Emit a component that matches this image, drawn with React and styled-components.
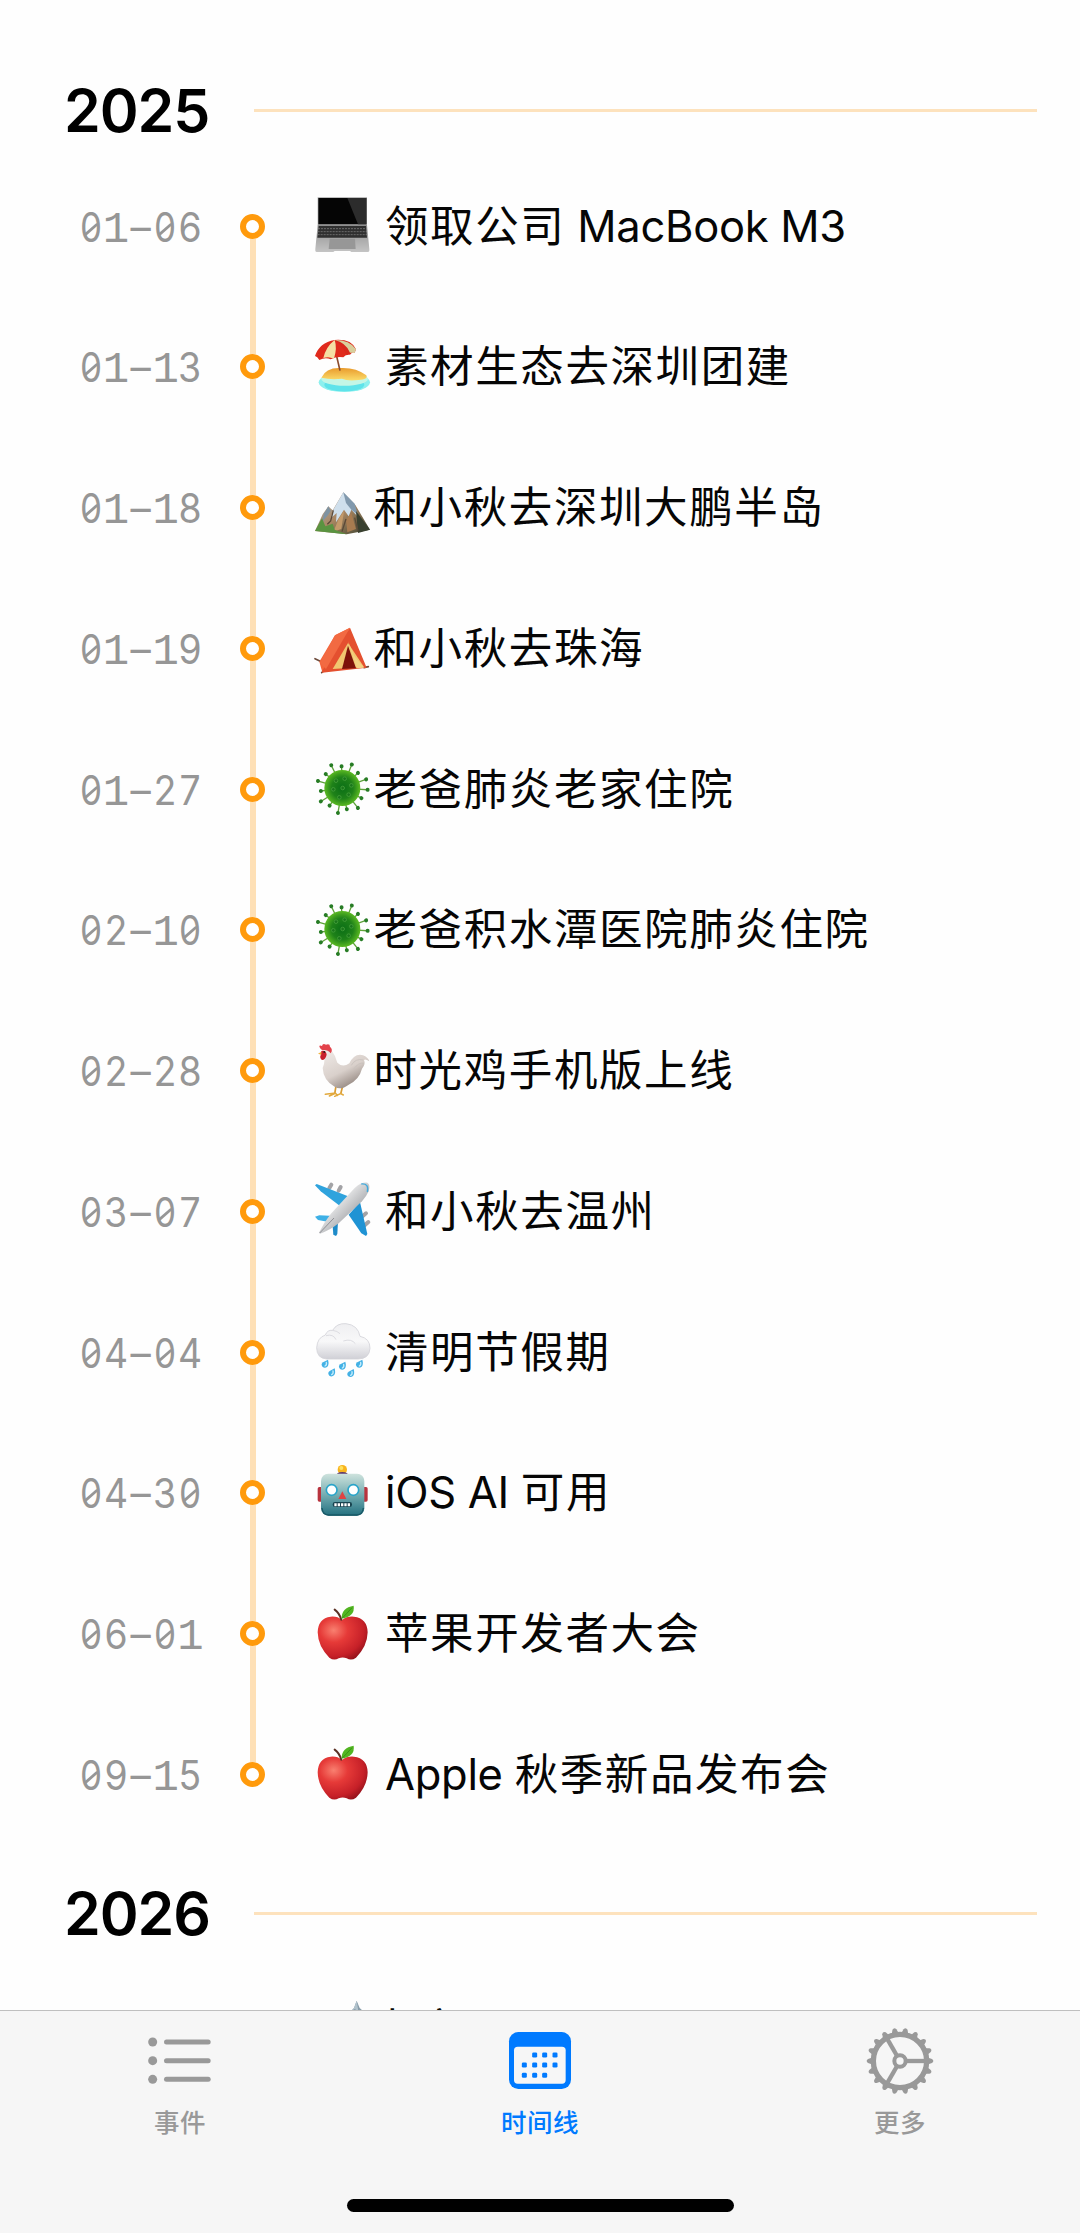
import styled, { createGlobalStyle } from 'styled-components'
import React from "react"

const GlobalStyle = createGlobalStyle`
    * {
        box-sizing: border-box;
    }
    body {
        margin: 0;
        background-color: #fefefe;
        font-family: Inter, "Noto Sans CJK SC", sans-serif;
    }
`;

const Screen = styled.div`
    width: 1080px;
    height: 2233px;
    display: flex;
    flex-direction: column;
    overflow: hidden;
    background-color: #fefefe;
`;

const Timeline = styled.main`
    height: 2010px;
    flex: none;
    padding-top: 65px;
    overflow: hidden;
`;

const YearSection = styled.section`
    margin-bottom: 23.3px;
`;

const YearHeader = styled.header`
    height: 90.8px;
    display: flex;
    align-items: center;
    padding: 0 43px 0 64px;
`;

const YearTitle = styled.h2`
    width: 190px;
    margin: 0;
    padding-top: 2px;
    color: #000;
    font-size: 59px;
    font-weight: 600;
    line-height: 70px;
    letter-spacing: -1.1px;
`;

const YearRule = styled.div`
    flex: 1;
    height: 3px;
    background-color: #fde2bd;
`;

const Row = styled.div`
    height: 140.76px;
    display: grid;
    grid-template-columns: 160px 66px 1fr;
    align-items: center;
    padding-left: 78.5px;
`;

const DateLabel = styled.time`
    display: grid;
    grid-template-columns: repeat(5, 24.9px);
    justify-items: center;
    align-items: baseline;
    color: #969696;
    font-size: 40.5px;
    font-weight: 400;
    line-height: 50px;
    font-feature-settings: "tnum";
    padding-top: 3px;
`;

const Digit = styled.span`
    transform: scaleX(0.92);
`;

const SlabDigit = styled.span`
    font-family: "Liberation Mono", monospace;
    font-size: 44px;
    line-height: 40px;
`;

// zero with a slash that stays inside the bowl
const Zero = styled.span`
    position: relative;
    transform: scaleX(0.86);

    &::after {
        content: '';
        position: absolute;
        left: 4px;
        right: 4px;
        top: 25px;
        height: 3px;
        background-color: #969696;
        transform: rotate(-37deg);
    }
`;

const Track = styled.div`
    width: 25px;
    height: 100%;
    margin-left: 1.5px;
    display: grid;
    grid-template-rows: 1fr 25px 1fr;
    justify-items: center;
`;

const TrackLine = styled.div`
    width: 6px;
    background-color: ${(props) => (props.$hidden ? 'transparent' : '#fee0b6')};
`;

const Dot = styled.div`
    width: 25px;
    height: 25px;
    border: 6px solid #ff9a0c;
    border-radius: 50%;
    background-color: #fff;
`;

const Event = styled.div`
    display: flex;
    align-items: center;
    padding-left: 9px;
    gap: ${(props) => (props.$spaced ? '15.5px' : '4px')};
`;

const EmojiSvg = styled.svg`
    width: 56px;
    height: 56px;
    flex: none;
    overflow: visible;
    margin-top: -2px;
`;

const EventText = styled.span`
    color: #060606;
    font-size: 43.5px;
    line-height: 60px;
    letter-spacing: ${(props) => (props.$latin ? '-0.3px' : '1.6px')};
    white-space: pre;
`;

const TitleBox = styled.div`
    margin-top: -1px;
`;

const TabBar = styled.nav`
    height: 223px;
    flex: none;
    display: flex;
    flex-direction: column;
    align-items: center;
    background-color: #f6f6f6;
    border-top: 1px solid #bfbfbf;
`;

const Tabs = styled.div`
    width: 100%;
    height: 188px;
    display: grid;
    grid-template-columns: repeat(3, 1fr);
    padding-top: 14px;
`;

const Tab = styled.div`
    display: flex;
    flex-direction: column;
    align-items: center;
    color: ${(props) => (props.$active ? '#007aff' : '#999')};
    font-size: 25.5px;
    font-weight: 500;
    line-height: 36px;
    letter-spacing: 0.5px;
    gap: 8px;
`;

const TabSvg = styled.svg`
    width: 72px;
    height: 72px;
`;

const HomeIndicator = styled.div`
    width: 387px;
    height: 13px;
    border-radius: 7px;
    background-color: #000;
`;

const Laptop = () => (
    <>
        <defs>
            <linearGradient id="lapBase" x1="0" y1="0" x2="0" y2="1">
                <stop offset="0" stopColor="#8e8e8e" />
                <stop offset="1" stopColor="#c4c4c4" />
            </linearGradient>
        </defs>
        <path d="M11 1H159V84H11Z" fill="#a9a9a9" />
        <path d="M13 3H157V82H13Z" fill="#050505" />
        <path d="M100 3H157V82H132Z" fill="#2c2c2c" />
        <path d="M11 84H159L166 156Q167 165 162 165L112 165L108 162H62L58 165H8Q3 165 4 156Z" fill="url(#lapBase)" />
        <path d="M14 87H156L159 122H10Z" fill="#303030" />
        <path d="M12 95H158M11 104H159M11 113H160" stroke="#8a8a8a" strokeWidth="2" strokeDasharray="6 3" />
        <path d="M47 125H123L125 156H44Z" fill="#979797" />
    </>
)

const Beach = () => (
    <>
        <defs>
            <linearGradient id="sand" x1="0" y1="0" x2="0" y2="1">
                <stop offset="0" stopColor="#e99b2c" />
                <stop offset="1" stopColor="#fbdc6b" />
            </linearGradient>
        </defs>
        <ellipse cx="91" cy="133" rx="77" ry="29" fill="#8df0ee" />
        <ellipse cx="91" cy="140" rx="60" ry="20" fill="#5fe3ea" />
        <ellipse cx="92" cy="123" rx="70" ry="20" fill="#c4f6e6" />
        <path d="M22 119Q36 88 80 90Q126 88 157 112Q164 124 134 126Q100 130 84 122Q50 126 22 119Z" fill="url(#sand)" />
        <path d="M66 46L78 98" stroke="#8b4a2b" strokeWidth="5" />
        <path d="M3 54Q16 14 62 6Q112 2 126 34L122 44Q116 40 108 50Q96 48 88 58Q70 54 50 64Q34 56 16 66Q10 56 3 54Z" fill="#e02a1c" />
        <path d="M62 6Q36 26 28 60Q44 54 60 62Q70 30 62 6Z" fill="#f5dfa4" />
        <path d="M62 6Q84 20 98 52L112 46Q94 14 62 6Z" fill="#d9281b" />
        <path d="M62 6Q108 6 126 34L122 44L108 44Q96 14 62 6Z" fill="#d8cf9c" />
    </>
)

const Mountain = () => (
    <>
        <defs>
            <linearGradient id="rock" x1="0" y1="0" x2="1" y2="1">
                <stop offset="0" stopColor="#a6b9c8" />
                <stop offset=".5" stopColor="#a98662" />
                <stop offset="1" stopColor="#37402d" />
            </linearGradient>
        </defs>
        <path d="M3 156L26 106L43 82L56 94L88 40L124 78L168 152L98 166Z" fill="url(#rock)" />
        <path d="M88 40L58 92L50 118L68 102L66 130L90 92L104 112L112 92L130 112L120 74Z" fill="#cfdfec" />
        <path d="M88 40L96 72L112 92L132 108L122 74Z" fill="#8199ad" />
        <path d="M43 82L30 104L24 130L42 108L50 96Z" fill="#7f93a2" />
        <path d="M74 120L90 96L82 150L58 158Z" fill="#c49a6a" />
        <path d="M112 102L126 150L100 160L96 122Z" fill="#a87b50" />
        <path d="M126 96L168 152L132 162Z" fill="#39402f" />
        <path d="M3 156L24 118L34 142L56 134L62 152L98 166Z" fill="#5a9340" />
        <path d="M58 94L50 126L40 136M96 120L84 158M122 116L132 156" stroke="#5b4938" strokeWidth="4" fill="none" />
    </>
)

const Tent = () => (
    <>
        <path d="M3 119L22 128M23 161L38 148M163 143L150 146" stroke="#6d4b3c" strokeWidth="5" strokeLinecap="round" />
        <path d="M63 49L108 26L56 151L25 160L16 128Z" fill="#f4643a" />
        <path d="M108 26L158 146L24 161Q22 156 28 150Z" fill="#e4502f" />
        <path d="M63 49L108 26L36 150L18 132Z" fill="#f26a42" />
        <path d="M102 72L56 150L150 144Z" fill="#f1c670" />
        <path d="M102 80L84 150L126 148Z" fill="#7d120a" />
        <path d="M102 66L120 110L150 146L128 148Z" fill="#f3d184" />
    </>
)

const spikes = [4, 28, 52, 78, 100, 126, 148, 172, 196, 220, 244, 268, 292, 316, 340]

const Virus = () => (
    <>
        <defs>
            <radialGradient id="virus">
                <stop offset="0" stopColor="#0a6e16" />
                <stop offset=".6" stopColor="#1f8219" />
                <stop offset="1" stopColor="#5ab822" />
            </radialGradient>
        </defs>
        {spikes.map((angle, i) => (
            <g key={angle} transform={`rotate(${angle} 85 84)`}>
                <path d={i % 2 ? 'M130 84H150' : 'M130 84H160'} stroke="#5da238" strokeWidth="4" />
                <circle cx={i % 2 ? 150 : 161} cy="84" r="6" fill="#277c25" />
            </g>
        ))}
        <circle cx="85" cy="84" r="54" fill="url(#virus)" />
        {[[66, 62], [92, 56], [112, 76], [58, 88], [86, 84], [104, 104], [76, 112]].map(([x, y]) => (
            <circle key={x} cx={x} cy={y} r="5.5" fill="#1a761b" stroke="#459f3a" strokeWidth="2.5" />
        ))}
    </>
)

const Chicken = () => (
    <>
        <defs>
            <linearGradient id="hen" x1="0" y1="0" x2=".6" y2="1">
                <stop offset="0" stopColor="#f1ece9" />
                <stop offset=".6" stopColor="#d9d0cb" />
                <stop offset="1" stopColor="#8f827b" />
            </linearGradient>
        </defs>
        <path d="M66 132L62 156M86 132L80 156" stroke="#d99c32" strokeWidth="5" />
        <path d="M34 157L64 153L70 160M46 162L64 154M62 163L80 155L88 159" stroke="#e2a93d" strokeWidth="4.5" fill="none" strokeLinecap="round" />
        <path d="M28 28Q38 16 52 24Q64 40 70 62Q86 78 106 64Q118 38 138 38Q158 38 166 58Q154 50 150 54Q156 66 144 80Q136 112 104 128Q80 146 62 134Q28 116 26 78Q36 58 28 28Z" fill="url(#hen)" />
        <path d="M112 70Q124 48 148 54M118 82Q134 60 150 64" stroke="#c8c0bc" strokeWidth="2.5" fill="none" />
        <path d="M18 18Q12 8 24 12Q26 2 36 8Q48 4 48 14Q58 22 50 34Q42 24 30 24Q22 26 18 18Z" fill="#e3424b" />
        <path d="M22 27Q36 24 38 38Q34 54 24 54Q16 48 20 40Z" fill="#c9202c" />
        <path d="M22 29L12 35L22 38Z" fill="#f0b13c" />
        <circle cx="31" cy="30" r="3" fill="#2b2020" />
    </>
)

const Plane = () => (
    <>
        <defs>
            <linearGradient id="body" x1="0" y1="0" x2="1" y2="1">
                <stop offset=".3" stopColor="#f4f4f4" />
                <stop offset=".7" stopColor="#a4a6aa" />
            </linearGradient>
        </defs>
        <path d="M46 18L52 8M74 26L80 15M144 104L156 94M152 130L163 120" stroke="#a3a3a6" strokeWidth="12" strokeLinecap="round" />
        <path d="M3 10L8 6L110 46L78 72L20 28Z" fill="#2fa3dd" />
        <path d="M138 60L104 98L142 154L156 162L160 156Z" fill="#1f93d4" />
        <path d="M3 104L16 100L62 102L44 120L12 114Z" fill="#3eb0e6" />
        <path d="M72 118L56 132L58 158L66 162L70 156Z" fill="#1e8bc9" />
        <path d="M15 152Q28 124 50 96L122 18Q142 0 160 2Q170 8 164 28Q158 42 144 58L74 124Q46 146 18 155Z" fill="url(#body)" />
        <path d="M142 6Q166 4 160 30" stroke="#3fa9dc" strokeWidth="4" fill="none" />
        <path d="M17 153L60 108" stroke="#8d8f94" strokeWidth="3" />
    </>
)

const Rain = () => (
    <>
        <defs>
            <linearGradient id="cloud" x1="0" y1="0" x2="0" y2="1">
                <stop offset="0" stopColor="#efeff1" />
                <stop offset=".5" stopColor="#f8f8f9" />
                <stop offset="1" stopColor="#d0d0d6" />
            </linearGradient>
        </defs>
        <path d="M38 108Q8 106 8 74Q10 44 34 36Q40 20 56 22Q68 0 96 2Q132 6 138 40Q168 46 168 76Q166 108 132 108Z" fill="url(#cloud)" stroke="#d3d3d8" strokeWidth="2.5" />
        <path d="M36 38Q58 32 66 50M88 54Q112 46 124 62M56 22Q70 24 78 32" stroke="#dcdce1" strokeWidth="3" fill="none" />
        {[[33, 122], [53, 148], [85, 128], [110, 150], [136, 122]].map(([x, y]) => (
            <g key={x} transform={`translate(${x} ${y})`}>
                <path d="M9 -12Q13 2 7 9Q0 15 -7 10Q-14 2 -6 -4Z" fill="#43b1e5" />
                <path d="M4 -4Q6 4 0 7" stroke="#c2ecfb" strokeWidth="4" fill="none" strokeLinecap="round" />
            </g>
        ))}
    </>
)

const Robot = () => (
    <>
        <defs>
            <linearGradient id="bot" x1="0" y1="0" x2="0" y2="1">
                <stop offset="0" stopColor="#cfe3dd" />
                <stop offset=".5" stopColor="#75adb2" />
                <stop offset="1" stopColor="#23707f" />
            </linearGradient>
        </defs>
        <rect x="11" y="69" width="16" height="44" rx="5" fill="#b8333e" />
        <rect x="145" y="69" width="16" height="44" rx="5" fill="#b8333e" />
        <circle cx="85" cy="17" r="14" fill="#f8b41d" />
        <circle cx="82" cy="12" r="6" fill="#ffe15c" />
        <path d="M67 36Q67 24 85 24Q103 24 103 36Z" fill="#5d3a70" />
        <rect x="21" y="29" width="130" height="126" rx="22" fill="url(#bot)" />
        <path d="M24 132Q26 152 44 153H128Q146 152 148 132" stroke="#195866" strokeWidth="4" fill="none" />
        <circle cx="53" cy="78" r="16" fill="#fff" stroke="#29a4c9" strokeWidth="5" />
        <circle cx="118" cy="78" r="16" fill="#fff" stroke="#29a4c9" strokeWidth="5" />
        <path d="M85 82L97 105H73Z" fill="#df4343" />
        <rect x="56" y="114" width="58" height="15" rx="7" fill="#18434f" />
        <path d="M61 122H110" stroke="#fff" strokeWidth="9" strokeDasharray="7 3" />
    </>
)

const Apple = () => (
    <>
        <defs>
            <radialGradient id="apple" cx=".32" cy=".32" r=".8">
                <stop offset="0" stopColor="#f98070" />
                <stop offset=".35" stopColor="#e63a38" />
                <stop offset=".75" stopColor="#c62028" />
                <stop offset="1" stopColor="#8a0f18" />
            </radialGradient>
        </defs>
        <path d="M84 45Q98 33 120 35Q160 40 161 82Q160 124 126 158Q112 168 98 160Q86 155 74 160Q60 168 46 158Q12 124 11 82Q12 40 50 35Q70 33 84 45Z" fill="url(#apple)" />
        <path d="M62 14Q76 24 82 44" stroke="#5b3125" strokeWidth="6" fill="none" strokeLinecap="round" />
        <path d="M83 41Q82 8 119 2Q124 34 83 41Z" fill="#52b522" />
        <path d="M85 39Q98 26 114 8" stroke="#348a14" strokeWidth="2.5" fill="none" />
    </>
)

const Peak = () => (
    <>
        <path d="M4 156L44 92L112 32L120 24L128 2L137 24L146 32L168 156L98 166Z" fill="#879caa" />
        <path d="M128 2L120 24L114 32L124 26L132 60L132 26Z" fill="#b2c3cd" />
    </>
)

const years = [
    {
        year: '2025',
        events: [
            { date: '01-06', Emoji: Laptop, text: '领取公司 MacBook M3', spaced: true },
            { date: '01-13', Emoji: Beach, text: '素材生态去深圳团建', spaced: true },
            { date: '01-18', Emoji: Mountain, text: '和小秋去深圳大鹏半岛' },
            { date: '01-19', Emoji: Tent, text: '和小秋去珠海' },
            { date: '01-27', Emoji: Virus, text: '老爸肺炎老家住院' },
            { date: '02-10', Emoji: Virus, text: '老爸积水潭医院肺炎住院' },
            { date: '02-28', Emoji: Chicken, text: '时光鸡手机版上线' },
            { date: '03-07', Emoji: Plane, text: '和小秋去温州', spaced: true },
            { date: '04-04', Emoji: Rain, text: '清明节假期', spaced: true },
            { date: '04-30', Emoji: Robot, text: 'iOS AI 可用', spaced: true },
            { date: '06-01', Emoji: Apple, text: '苹果开发者大会', spaced: true },
            { date: '09-15', Emoji: Apple, text: 'Apple 秋季新品发布会', spaced: true },
        ],
    },
    {
        year: '2026',
        events: [{ date: '', Emoji: Peak, text: '老家' }],
    },
]

const DateText = ({ value }) => (
    <DateLabel>
        {value.split('').map((char, i) => {
            if (char === '1') return <SlabDigit key={i}>1</SlabDigit>
            if (char === '0') return <Zero key={i}>0</Zero>
            if (char === '-') return <span key={i}>–</span>
            return <Digit key={i}>{char}</Digit>
        })}
    </DateLabel>
)

// latin runs keep their own tighter tracking next to the CJK text
const Title = ({ text }) => (
    <TitleBox>
        {text.split(/([A-Za-z0-9 ]+)/).filter(Boolean).map((part, i) => (
            <EventText key={i} $latin={/[A-Za-z0-9 ]/.test(part)}>{part}</EventText>
        ))}
    </TitleBox>
)

const TimelineRow = ({ event, first, last }) => {
    const { date, Emoji, text, spaced } = event

    return (
        <Row>
            <DateText value={date} />
            <Track>
                <TrackLine $hidden={first} />
                <Dot />
                <TrackLine $hidden={last} />
            </Track>
            <Event $spaced={spaced}>
                <EmojiSvg viewBox="0 0 168 168"><Emoji /></EmojiSvg>
                <Title text={text} />
            </Event>
        </Row>
    )
}

const ListIcon = () => (
    <TabSvg viewBox="0 0 216 216">
        {[51, 107, 163].map((y) => (
            <g key={y}>
                <circle cx="26" cy={y} r="13.5" fill="currentColor" />
                <path d={`M67.5 ${y}H192.5`} stroke="currentColor" strokeWidth="15" strokeLinecap="round" />
            </g>
        ))}
    </TabSvg>
)

const days = [[92, 90], [122, 90], [153, 90], [61, 120], [92, 120], [122, 120], [153, 120], [61, 151], [92, 151], [122, 151]]

const CalendarIcon = () => (
    <TabSvg viewBox="0 0 216 216">
        <rect x="15" y="21" width="186" height="171" rx="28" fill="currentColor" />
        <rect x="30" y="65" width="155" height="111" rx="11" fill="#f6f6f6" />
        {days.map(([x, y]) => (
            <rect key={`${x}-${y}`} x={x - 7.5} y={y - 7.5} width="15" height="15" rx="4" fill="currentColor" />
        ))}
    </TabSvg>
)

const GearIcon = () => (
    <TabSvg viewBox="0 0 216 216">
        {Array.from({ length: 18 }, (_, i) => (
            <path key={i} d="M184 95L204 102Q212 108 204 114L184 121Z" fill="currentColor" transform={`rotate(${i * 20} 108 108)`} />
        ))}
        <g fill="none" stroke="currentColor">
            <circle cx="108" cy="108" r="80" strokeWidth="16" />
            <circle cx="108" cy="108" r="17" strokeWidth="12" />
            {[0, 120, 240].map((angle) => (
                <path key={angle} d="M127 108H182" strokeWidth="13" transform={`rotate(${angle} 108 108)`} />
            ))}
        </g>
    </TabSvg>
)

const App = () => {
    return (
        <Screen>
            <GlobalStyle />
            <Timeline>
                {years.map(({ year, events }) => (
                    <YearSection key={year}>
                        <YearHeader>
                            <YearTitle>{year}</YearTitle>
                            <YearRule />
                        </YearHeader>
                        {events.map((event, i) => (
                            <TimelineRow
                                key={event.text}
                                event={event}
                                first={i === 0}
                                last={i === events.length - 1}
                            />
                        ))}
                    </YearSection>
                ))}
            </Timeline>
            <TabBar>
                <Tabs>
                    <Tab><ListIcon />事件</Tab>
                    <Tab $active><CalendarIcon />时间线</Tab>
                    <Tab><GearIcon />更多</Tab>
                </Tabs>
                <HomeIndicator />
            </TabBar>
        </Screen>
    )
}

export default App
